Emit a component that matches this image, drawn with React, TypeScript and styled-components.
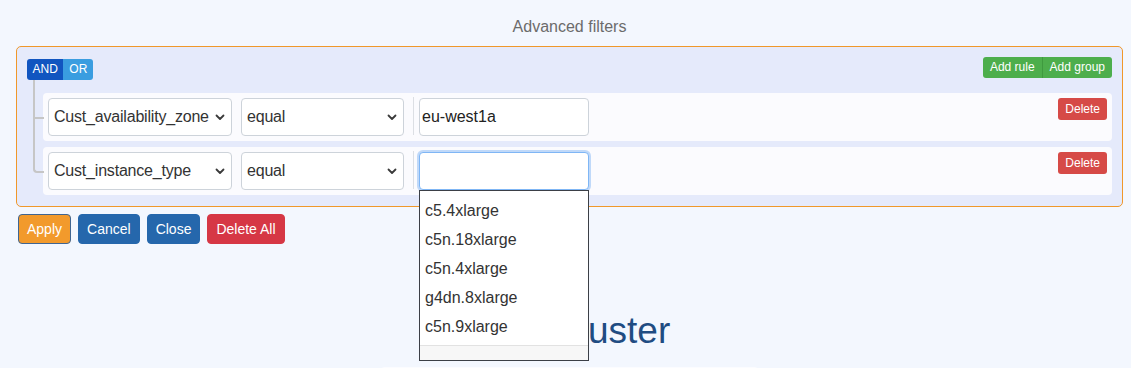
import React from 'react';
import styled, { createGlobalStyle, css } from 'styled-components';

const GlobalStyle = createGlobalStyle`
  html, body {
    margin: 0;
    padding: 0;
    background: #f3f7fe;
    font-family: "Liberation Sans", Arial, Helvetica, sans-serif;
    overflow: hidden;
  }
`;

const rules = [
  { field: 'Cust_availability_zone', operator: 'equal', value: 'eu-west1a', focused: false },
  { field: 'Cust_instance_type', operator: 'equal', value: '', focused: true },
];

const suggestions = ['c5.4xlarge', 'c5n.18xlarge', 'c5n.4xlarge', 'g4dn.8xlarge', 'c5n.9xlarge'];

const Chevron = () => (
  <svg width="10" height="7" viewBox="0 0 10 7">
    <path d="M1.5 1.5l3.5 3.5 3.5-3.5" fill="none" stroke="#3a3a3a" strokeWidth="1.8" strokeLinecap="round" strokeLinejoin="round" />
  </svg>
);

export default function App() {
  return (
    <Page>
      <GlobalStyle />
      <Title>Advanced filters</Title>
      <GroupBox>
        <GroupHeader>
          <BtnGroup>
            <ConditionButton $active>AND</ConditionButton>
            <ConditionButton>OR</ConditionButton>
          </BtnGroup>
          <BtnGroup $lift>
            <AddButton>Add rule</AddButton>
            <AddButton>Add group</AddButton>
          </BtnGroup>
        </GroupHeader>
        <RulesList>
          {rules.map((rule, i) => (
            <Rule key={i} $first={i === 0} $last={i === rules.length - 1}>
              <Select $width={184}>
                <FieldText>{rule.field}</FieldText>
                <Chevron />
              </Select>
              <Select $width={163}>
                <FieldText>{rule.operator}</FieldText>
                <Chevron />
              </Select>
              <Separator />
              <ValueWrap>
                <ValueInput $focused={rule.focused}>{rule.value}</ValueInput>
                {rule.focused && (
                  <Dropdown>
                    {suggestions.map((s) => (
                      <DropdownItem key={s}>{s}</DropdownItem>
                    ))}
                    <DropdownFooter />
                  </Dropdown>
                )}
              </ValueWrap>
              <DeleteButton>Delete</DeleteButton>
            </Rule>
          ))}
        </RulesList>
      </GroupBox>
      <Actions>
        <ActionButton $kind="apply">Apply</ActionButton>
        <ActionButton $kind="primary">Cancel</ActionButton>
        <ActionButton $kind="primary">Close</ActionButton>
        <ActionButton $kind="danger">Delete All</ActionButton>
      </Actions>
      <Heading>New Cluster</Heading>
      <Card />
    </Page>
  );
}

const Page = styled.div`
  padding: 0 8px 0 16px;
  display: flex;
  flex-direction: column;
`;

const Title = styled.div`
  margin-top: 17px;
  height: 20px;
  line-height: 20px;
  margin-bottom: 9px;
  text-align: center;
  font-size: 16px;
  color: #6b6b6b;
`;

const GroupBox = styled.div`
  border: 1px solid #f0982a;
  border-radius: 5px;
  background: #e5eafb;
  padding: 12px 10px 11px 10px;
`;

const GroupHeader = styled.div`
  display: flex;
  justify-content: space-between;
  align-items: flex-start;
`;

const BtnGroup = styled.div<{ $lift?: boolean }>`
  display: flex;
  border-radius: 3px;
  overflow: hidden;
  ${({ $lift }) => $lift && css`margin-top: -2px;`}
`;

const ConditionButton = styled.div<{ $active?: boolean }>`
  height: 21px;
  line-height: 21px;
  padding: 0 ${({ $active }) => ($active ? '5.5px' : '6px')};
  font-size: 12px;
  color: #fff;
  background: ${({ $active }) => ($active ? '#1155c0' : '#3a9de0')};
`;

const AddButton = styled.div`
  height: 21px;
  line-height: 21px;
  padding: 0 7px;
  font-size: 12px;
  color: #fff;
  background: #4dae4c;
  & + & {
    border-left: 1px solid #3f9a3f;
  }
`;

const RulesList = styled.div`
  margin-top: 13px;
  padding-left: 16px;
  display: flex;
  flex-direction: column;
  gap: 6px;
`;

const Rule = styled.div<{ $first: boolean; $last: boolean }>`
  position: relative;
  display: flex;
  align-items: flex-start;
  height: 48px;
  box-sizing: border-box;
  padding: 5px;
  background: #fbfbfe;
  border-radius: 4px;

  &::before {
    content: '';
    position: absolute;
    left: -10px;
    width: 9px;
    top: ${({ $first }) => ($first ? '-13px' : '-6px')};
    height: ${({ $first }) => ($first ? 'calc(50% + 13px)' : 'calc(50% + 6px)')};
    border-left: 2px solid #c6c6c6;
    border-bottom: 2px solid #c6c6c6;
    border-radius: ${({ $last }) => ($last ? '0 0 0 4px' : '0')};
  }

  &::after {
    content: '';
    display: ${({ $last }) => ($last ? 'none' : 'block')};
    position: absolute;
    left: -10px;
    top: 50%;
    height: 50%;
    border-left: 2px solid #c6c6c6;
  }
`;

const Select = styled.div<{ $width: number }>`
  width: ${({ $width }) => $width}px;
  height: 38px;
  box-sizing: border-box;
  margin-right: 9px;
  display: flex;
  align-items: center;
  justify-content: space-between;
  gap: 3px;
  padding: 0 6px 0 5px;
  border: 1px solid #cdd3da;
  border-radius: 4px;
  background: #fff;
  font-size: 16px;
  color: #333;
  white-space: nowrap;
`;

const FieldText = styled.span`
  letter-spacing: -0.2px;
  overflow: hidden;
`;

const Separator = styled.div`
  width: 1px;
  height: 38px;
  margin-top: -1px;
  background: #dcdfe4;
  margin-right: 5px;
`;

const ValueWrap = styled.div`
  position: relative;
`;

const ValueInput = styled.div<{ $focused: boolean }>`
  width: 170px;
  height: 38px;
  box-sizing: border-box;
  padding: 0 2px;
  display: flex;
  align-items: center;
  border: 1px solid ${({ $focused }) => ($focused ? '#7fb6f5' : '#cdd3da')};
  border-radius: 4px;
  background: #fff;
  font-size: 16px;
  color: #222;
  ${({ $focused }) =>
    $focused &&
    css`
      box-shadow: 0 0 0 2px rgba(120, 175, 245, 0.45);
    `}
`;

const Dropdown = styled.div`
  position: absolute;
  left: 0;
  top: 38px;
  width: 170px;
  box-sizing: border-box;
  border: 1px solid #3b3f46;
  background: #fff;
  padding-top: 5px;
  z-index: 10;
`;

const DropdownItem = styled.div`
  height: 29px;
  line-height: 29px;
  padding-left: 5px;
  font-size: 16px;
  color: #333;
`;

const DropdownFooter = styled.div`
  margin-top: 4px;
  height: 14px;
  border-top: 1px solid #e2e2e2;
  background: #f7f7f7;
`;

const DeleteButton = styled.div`
  margin-left: auto;
  height: 22px;
  line-height: 22px;
  padding: 0 7px;
  border-radius: 3px;
  background: #d64a47;
  font-size: 12px;
  color: #fff;
`;

const Actions = styled.div`
  display: flex;
  gap: 7px;
  margin-top: 7px;
  margin-left: 2px;
`;

const kinds = {
  apply: css`
    background: #f29a2c;
    border-color: #3f6592;
  `,
  primary: css`
    background: #2567ac;
    border-color: #2567ac;
  `,
  danger: css`
    background: #d63745;
    border-color: #d63745;
  `,
};

const ActionButton = styled.div<{ $kind: keyof typeof kinds }>`
  height: 30px;
  box-sizing: border-box;
  line-height: 28px;
  padding: 0 8px;
  border: 1px solid transparent;
  border-radius: 4px;
  font-size: 14px;
  color: #fff;
  ${({ $kind }) => kinds[$kind]}
`;

const Heading = styled.h1`
  margin: 65px 0 0 0;
  height: 44px;
  line-height: 44px;
  text-align: center;
  font-size: 37px;
  font-weight: 400;
  color: #1f4c82;
`;

const Card = styled.div`
  align-self: center;
  width: 375px;
  height: 2px;
  margin-top: 14px;
  border-radius: 6px 6px 0 0;
  background: #fbfcff;
`;
